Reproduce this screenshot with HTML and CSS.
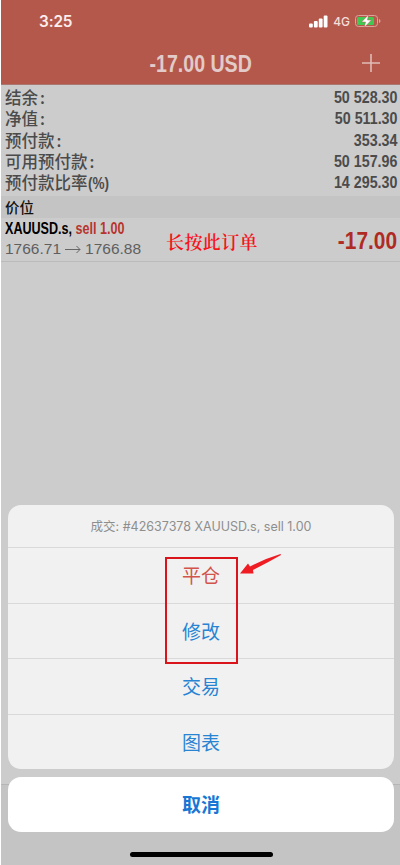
FILE: index.html
```html
<!DOCTYPE html>
<html lang="zh-CN">
<head>
<meta charset="utf-8">
<title>-17.00 USD</title>
<link rel="stylesheet" href="styles.css">
</head>
<body>
<div class="screen">
  <header class="header">
    <div class="status">
      <span class="time">3:25</span>
      <div class="indicators">
        <svg class="signal" width="19" height="13" viewBox="0 0 19 13" fill="#fff"><rect x="0" y="8.500" width="3.800" height="4" rx="1"/><rect x="4.900" y="6" width="3.800" height="6.500" rx="1"/><rect x="9.800" y="3.500" width="3.800" height="9" rx="1"/><rect x="14.700" y="0.500" width="3.800" height="12" rx="1"/></svg>
        <span class="network">4G</span>
        <svg class="battery" width="26" height="14" viewBox="0 0 26 14"><rect x="0.500" y="1.500" width="22" height="11" rx="3" fill="none" stroke="#dba39b"/><rect x="2" y="3" width="17" height="8" rx="1.500" fill="#3fc953"/><path d="M24 5v4q1.500-.6 1.500-2T24 5z" fill="#dba39b"/><path d="M13.500 .8L6.500 8h4L9.200 13.500 16.500 6h-4z" fill="#fff" stroke="#b5584c" stroke-width=".5"/></svg>
      </div>
    </div>
    <div class="titlebar">
      <h1 class="title">-17.00 USD</h1>
      <svg class="add" width="18" height="18" viewBox="0 0 18 18" stroke="#dfbcb7" stroke-width="1.600"><path d="M9 0v18M0 9h18"/></svg>
    </div>
  </header>
  <dl class="summary">
    <div class="line"><dt>结余<span class="colon">:</span></dt><dd>50 528.30</dd></div>
    <div class="line"><dt>净值<span class="colon">:</span></dt><dd>50 511.30</dd></div>
    <div class="line"><dt>预付款<span class="colon">:</span></dt><dd>353.34</dd></div>
    <div class="line"><dt>可用预付款<span class="colon">:</span></dt><dd>50 157.96</dd></div>
    <div class="line"><dt>预付款比率<span class="pct">(%)</span></dt><dd>14 295.30</dd></div>
  </dl>
  <h2 class="section">价位</h2>
  <div class="order">
    <div class="order-info">
      <div class="symbol">XAUUSD.s, <span class="side">sell 1.00</span></div>
      <div class="prices"><span>1766.71</span><svg width="16" height="9" viewBox="0 0 16 9" fill="none" stroke="#666"><path d="M0 4.500h15M11.500 1L15 4.500 11.500 8"/></svg><span>1766.88</span></div>
    </div>
    <span class="note">长按此订单</span>
    <span class="profit">-17.00</span>
  </div>
  <div class="tabbar"></div>
  <div class="overlay">
    <div class="sheet">
      <div class="caption">成交: #42637378 XAUUSD.s, sell 1.00</div>
      <div class="action danger">平仓</div>
      <div class="action">修改</div>
      <div class="action">交易</div>
      <div class="action">图表</div>
      <div class="highlight"></div>
      <svg class="pointer" width="43" height="22" viewBox="0 0 43 22" fill="#ef1c24"><path d="M0 19.500L8 9.500 10 12.500Q24 5 40.500 0L41 1Q27 9 13 16L13.500 19.500z"/></svg>
    </div>
    <div class="cancel">取消</div>
    <div class="home"></div>
  </div>
</div>
</body>
</html>
```

FILE: styles.css
```css
* { box-sizing: border-box; }
body { margin: 0; background: #fff; font-family: "Liberation Sans", "Noto Sans CJK SC", sans-serif; }
h1, h2, dl, dd { margin: 0; }
svg { display: block; }
.screen { position: relative; display: flex; flex-direction: column; height: 865px; margin-left: 1px; background: #ccc; overflow: hidden; }
.header { height: 85px; background: #b5584c; border-bottom: 1px solid #a9776f; }
.status { display: flex; justify-content: space-between; align-items: center; height: 42px; padding: 0 19px 0 38px; }
.time { font: 600 15.300px Inter, sans-serif; color: #fbeeec; letter-spacing: -.1px; }
.indicators { display: flex; align-items: center; }
.network { margin: 1px 5px 0 5px; font: 500 12px Inter, sans-serif; color: #f3dedb; }
.titlebar { display: grid; grid-template-columns: 1fr auto 1fr; align-items: center; height: 42px; padding-right: 20px; }
.title { grid-column: 2; margin: 2px 0 0 20px; font: bold 24px "Liberation Sans", sans-serif; color: #e2cbc8; transform: scaleX(.815); }
.add { justify-self: end; }
.summary { height: 111px; padding: 2px 3px 0 4px; color: #4b4b4b; }
.line { display: flex; justify-content: space-between; height: 21.300px; }
.line dt { font: 500 16.500px/21px "Noto Sans CJK SC", sans-serif; white-space: nowrap; }
.line dd { font: bold 16.500px/21px "Liberation Sans", sans-serif; transform: scaleX(.865); transform-origin: right; }
.colon { margin-left: 2px; }
.pct { display: inline-block; font-family: "Liberation Sans", sans-serif; font-weight: bold; transform: scaleX(.82); transform-origin: left; }
.section { height: 22px; padding-left: 4px; background: #c4c4c4; font: 500 14.500px/21px "Noto Sans CJK SC", sans-serif; color: #111; }
.order { display: flex; height: 44px; padding: 0 3px 0 4px; border-bottom: 1px solid #bbb; }
.order-info { width: 161px; padding-top: 1px; }
.symbol { font: bold 16px/20px "Liberation Sans", sans-serif; color: #000; white-space: nowrap; transform: scaleX(.785); transform-origin: left; }
.side { color: #b7352f; }
.prices { display: flex; align-items: center; gap: 4px; font-size: 15.500px; line-height: 20px; color: #5f5f5f; }
.note { padding-top: 10px; font: 600 18px/26px "Noto Serif CJK SC", "Noto Sans CJK SC", serif; letter-spacing: .4px; color: #f5141a; }
.profit { margin-left: auto; font: bold 24px/45px "Liberation Sans", sans-serif; color: #b02a24; transform: scaleX(.87); transform-origin: right; }
.tabbar { height: 81px; margin-top: auto; background: #c4c4c4; border-top: 1px solid #b5b5b5; }
.overlay { position: absolute; left: 7px; right: 6px; bottom: 0; height: 360px; display: flex; flex-direction: column; }
.sheet { position: relative; height: 264px; border-radius: 13px; background: #f1f1f1; }
.caption { height: 42px; font: 400 12.500px/44px Inter, "Noto Sans CJK SC", sans-serif; text-align: center; color: #8e8e8e; }
.action { height: 55.500px; border-top: 1px solid #d9d9d9; font: 400 19px/54px "Noto Sans CJK SC", sans-serif; text-align: center; color: #2784d3; }
.danger { color: #d2544b; }
.highlight { position: absolute; left: 157px; top: 52px; width: 73px; height: 107px; border: 2px solid #d9141b; }
.pointer { position: absolute; left: 232px; top: 49px; }
.cancel { height: 55px; margin-top: 8px; border-radius: 13px; background: #fff; font: 700 19px/54px "Noto Sans CJK SC", sans-serif; text-align: center; color: #1877d4; }
.home { width: 143px; height: 5px; margin: 20px auto 0; border-radius: 3px; background: #000; }
```
